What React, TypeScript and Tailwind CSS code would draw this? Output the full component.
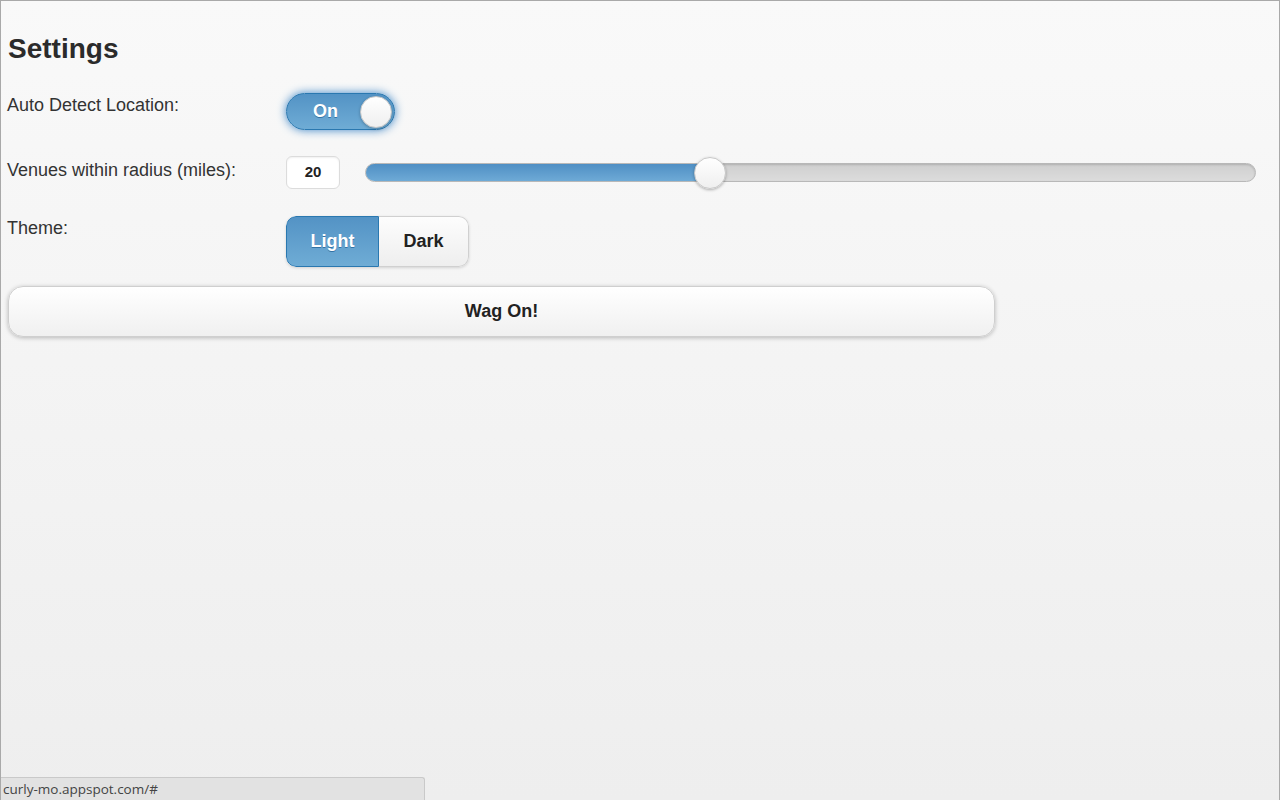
import { useState } from "react";

const font = { fontFamily: '"Liberation Sans", Arial, sans-serif' };

function Toggle({ on, onChange }: { on: boolean; onChange: (v: boolean) => void }) {
  return (
    <button
      onClick={() => onChange(!on)}
      className="flex h-[37px] w-[109px] items-center rounded-full border border-[#2a78b0] bg-gradient-to-b from-[#5393c5] to-[#6facd5] p-[2px] shadow-[0_0_10px_#3b84c6]"
    >
      <span className="flex-1 pl-[2px] text-center text-[18px] font-bold text-white [text-shadow:0_1px_0_#3373a5]">
        {on ? "On" : "Off"}
      </span>
      <span className="h-[32px] w-[32px] rounded-full border border-[#c6c6c6] bg-gradient-to-b from-white to-[#efefef] shadow-[0_1px_3px_rgba(0,0,0,0.25)]" />
    </button>
  );
}

function Slider({ value, min, max }: { value: number; min: number; max: number }) {
  const pct = ((value - min) / (max - min)) * 100;
  return (
    <div className="relative flex h-[19px] flex-1 items-center">
      <div className="relative h-[19px] w-full overflow-hidden rounded-full border border-[#b8b8b8] bg-gradient-to-b from-[#cfcfcf] to-[#dcdcdc] shadow-[inset_0_1px_2px_rgba(0,0,0,0.15)]">
        <div
          className="h-full bg-gradient-to-b from-[#4f8fc4] to-[#6eaad6]"
          style={{ width: `${pct}%` }}
        />
      </div>
      {/* knob */}
      <div
        className="absolute top-1/2 h-[32px] w-[32px] -translate-x-1/2 -translate-y-1/2 rounded-full border border-[#c8c8c8] bg-gradient-to-b from-white to-[#efefef] shadow-[0_1px_3px_rgba(0,0,0,0.3)]"
        style={{ left: `${pct}%` }}
      />
    </div>
  );
}

export default function App() {
  const [auto, setAuto] = useState(true);
  const [theme, setTheme] = useState<"light" | "dark">("light");

  return (
    <div
      className="relative h-[800px] w-full overflow-hidden border-x border-t border-[#a9a9a9] bg-gradient-to-b from-[#f9f9f9] to-[#eeeeee] pl-[6px] pr-[23px] text-[#333]"
      style={font}
    >
      <h1 className="mt-[33px] pl-[1px] text-[28px] font-bold leading-[30px] text-[#2b2b2b]">Settings</h1>

      <div className="mt-[29px] flex">
        <label className="w-[279px] pt-[1px] text-[18px] leading-[22px]">Auto Detect Location:</label>
        <Toggle on={auto} onChange={setAuto} />
      </div>

      <div className="mt-[25px] flex h-[35px] items-center">
        <label className="w-[279px] self-start pt-[4px] text-[18px] leading-[22px]">Venues within radius (miles):</label>
        <div className="flex h-[33px] w-[54px] items-center justify-center rounded-[6px] border border-[#dcdcdc] bg-white text-[15px] font-bold text-[#222] shadow-[inset_0_1px_2px_rgba(0,0,0,0.06)]">
          20
        </div>
        <div className="ml-[25px] flex flex-1">
          <Slider value={20} min={1} max={50} />
        </div>
      </div>

      <div className="mt-[26px] flex">
        <label className="w-[279px] pt-[1px] text-[18px] leading-[22px]">Theme:</label>
        <div className="flex h-[51px] overflow-hidden rounded-[10px] shadow-[0_1px_3px_rgba(0,0,0,0.15)]">
          <button
            onClick={() => setTheme("light")}
            className={
              theme === "light"
                ? "w-[93px] rounded-l-[10px] border border-[#2a78b0] bg-gradient-to-b from-[#5393c5] to-[#6facd5] text-[18px] font-bold text-white [text-shadow:0_1px_0_#3373a5]"
                : "w-[93px] rounded-l-[10px] border border-[#cccccc] bg-gradient-to-b from-[#fdfdfd] to-[#eeeeee] text-[18px] font-bold text-[#222]"
            }
          >
            Light
          </button>
          <button
            onClick={() => setTheme("dark")}
            className={
              theme === "dark"
                ? "w-[90px] rounded-r-[10px] border border-[#2a78b0] bg-gradient-to-b from-[#5393c5] to-[#6facd5] text-[18px] font-bold text-white [text-shadow:0_1px_0_#3373a5]"
                : "w-[90px] rounded-r-[10px] border border-l-0 border-[#d0d0d0] bg-gradient-to-b from-[#fdfdfd] to-[#eeeeee] text-[18px] font-bold text-[#222]"
            }
          >
            Dark
          </button>
        </div>
      </div>

      <button className="mt-[19px] ml-[1px] flex h-[51px] w-[987px] items-center justify-center rounded-[15px] border border-[#cfcfcf] bg-gradient-to-b from-white to-[#f0f0f0] text-[18px] font-bold text-[#222] shadow-[0_1px_4px_rgba(0,0,0,0.25)]">
        Wag On!
      </button>

      {/* status bar */}
      <div
        className="absolute bottom-0 left-0 flex h-[23px] w-[424px] items-center rounded-tr-[3px] border-t border-r border-[#c9c9c9] bg-[#e2e2e2] pl-[2px] text-[13.5px] text-[#444]"
        style={{ fontFamily: '"Open Sans", "Noto Sans", sans-serif' }}
      >
        curly-mo.appspot.com/#
      </div>
    </div>
  );
}
